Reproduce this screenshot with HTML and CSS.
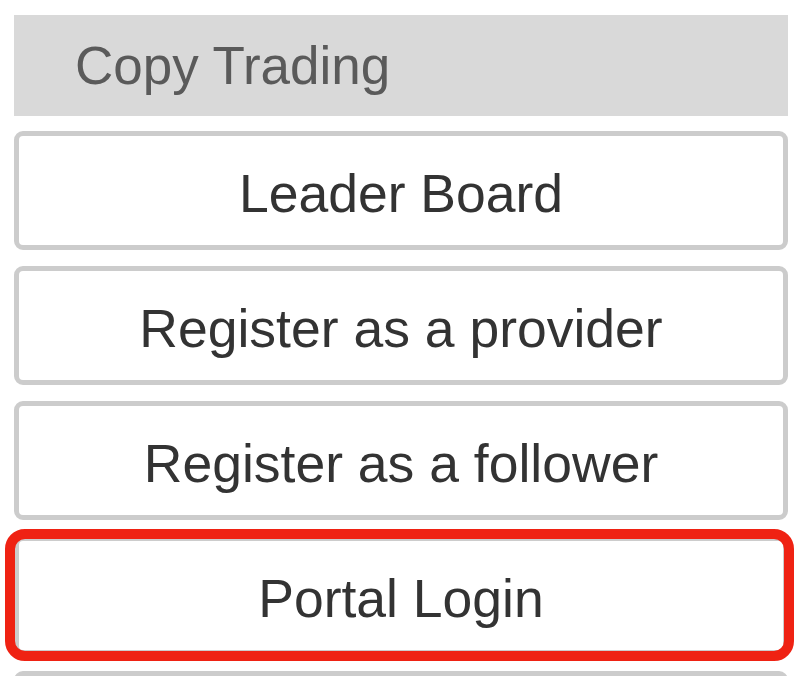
FILE: index.html
```html
<!DOCTYPE html>
<html lang="en">
<head>
<meta charset="utf-8">
<title>Copy Trading</title>
<link rel="stylesheet" href="styles.css">
</head>
<body>
<div class="menu">
  <div class="menu-header">Copy Trading</div>
  <a class="menu-btn" href="#">Leader Board</a>
  <a class="menu-btn" href="#">Register as a provider</a>
  <a class="menu-btn" href="#">Register as a follower</a>
  <a class="menu-btn highlighted" href="#">Portal Login</a>
  <a class="menu-btn" href="#" aria-label="More"></a>
</div>
</body>
</html>
```
FILE: styles.css
```css
html, body {
  margin: 0;
  padding: 0;
  background: #ffffff;
  overflow: hidden;
}
body {
  font-family: "Liberation Sans", Arial, Helvetica, sans-serif;
  height: 676px;
}
.menu {
  display: flex;
  flex-direction: column;
  gap: 16px;
  padding: 15px 16px 0 14px;
}
.menu-header {
  height: 101px;
  background: #d9d9d9;
  color: #5a5a5a;
  font-size: 53px;
  display: flex;
  align-items: center;
  padding-left: 61px;
  margin-bottom: -1px;
}
.menu-btn {
  position: relative;
  height: 103px;
  padding-top: 6px;
  flex-shrink: 0;
  border: 5px solid #cccccc;
  border-radius: 9px;
  background: #ffffff;
  color: #333333;
  font-size: 53.5px;
  text-decoration: none;
  display: flex;
  align-items: center;
  justify-content: center;
}
.highlighted::after {
  content: "";
  position: absolute;
  top: -12px;
  left: -14px;
  right: -11px;
  bottom: -11px;
  border: 10px solid #ef2213;
  border-radius: 20px;
  pointer-events: none;
}
```
